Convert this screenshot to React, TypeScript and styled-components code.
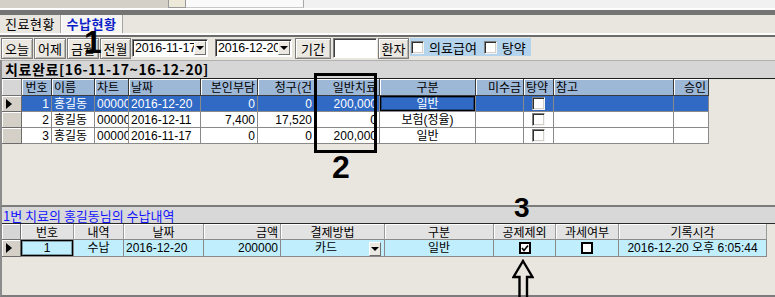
import React from 'react';
import styled, { createGlobalStyle } from 'styled-components';

type Align = 'left' | 'center' | 'right';

const GlobalStyle = createGlobalStyle`
  html, body {
    margin: 0;
    padding: 0;
    background: #e9e6df;
  }
  body {
    font-family: "Liberation Sans", "Noto Sans CJK KR", sans-serif;
    font-size: 12px;
    color: #000;
  }
`;

const Screen = styled.div`
  position: relative;
  width: 775px;
  height: 297px;
  overflow: hidden;
  background: #e9e6df;
`;

// window chrome at the very top
const TopStrip = styled.div`
  display: flex;
  height: 8px;
  background: #f1f1f1;
`;

const StripGray = styled.div`
  width: 168px;
  background: #d4d0c8;
`;

const StripArrow = styled.div`
  width: 18px;
  box-sizing: border-box;
  background: #ece9d8;
  border: 1px solid #9a9a9a;
  border-top: none;
`;

const StripField = styled.div`
  width: 118px;
  box-sizing: border-box;
  background: #fafafa;
  border-right: 1px solid #a8a8a8;
  border-bottom: 1px solid #c8c8c8;
`;

const WindowBand = styled.div`
  height: 5px;
  border-top: 2px solid #fcfcfc;
  background: #747474;
`;

const TabBar = styled.div`
  display: flex;
  height: 18px;
`;

const Tab = styled.div<{ $active?: boolean; $w: number }>`
  width: ${p => p.$w}px;
  box-sizing: border-box;
  display: flex;
  align-items: center;
  justify-content: center;
  font-family: "Noto Sans CJK KR", sans-serif;
  font-size: 13px;
  line-height: 16px;
  letter-spacing: 0.5px;
  font-weight: ${p => (p.$active ? 'bold' : 'normal')};
  color: ${p => (p.$active ? '#0a1ec8' : '#000')};
  background: ${p => (p.$active ? '#f6f5f2' : 'transparent')};
  border-right: 1px solid #a4a4a4;
  box-shadow: ${p => (p.$active ? 'inset 1px 0 0 #fff' : 'none')};
`;

const TabSeparator = styled.div`
  border-top: 2px solid #fdfdfd;
  border-bottom: 2px solid #6c6c6c;
`;

const Toolbar = styled.div`
  display: flex;
  align-items: flex-start;
  height: 23px;
  padding-top: 1px;
  box-sizing: border-box;
`;

const ToolButton = styled.div<{ $w: number; $ml: number }>`
  width: ${p => p.$w}px;
  margin-left: ${p => p.$ml}px;
  height: 21px;
  box-sizing: border-box;
  display: flex;
  align-items: center;
  justify-content: center;
  font-family: "Noto Sans CJK KR", sans-serif;
  font-size: 13px;
  line-height: 15px;
  background: #ebe8e1;
  border: 1px solid #7c7c7c;
  box-shadow: inset 1px 1px 0 #fff, inset -1px -1px 0 #b8b6b0;
`;

const Combo = styled.div<{ $w: number; $ml: number }>`
  width: ${p => p.$w}px;
  margin-left: ${p => p.$ml}px;
  margin-top: 1px;
  height: 18px;
  box-sizing: border-box;
  display: flex;
  background: #fff;
  border: 1px solid;
  border-color: #7a7a7a #fff #fff #7a7a7a;
  box-shadow: inset 1px 1px 0 #303030;
  overflow: hidden;
`;

const ComboText = styled.div`
  flex: 1;
  overflow: hidden;
  white-space: nowrap;
  padding: 1px 0 0 2px;
  font-size: 12.5px;
  line-height: 15px;
  letter-spacing: -0.2px;
`;

const DropButton = styled.div<{ $h: number }>`
  width: 12px;
  height: ${p => p.$h}px;
  margin: 1px 1px 0 0;
  box-sizing: border-box;
  display: flex;
  align-items: center;
  justify-content: center;
  background: #ece9e2;
  border: 1px solid;
  border-color: #fff #707070 #707070 #fff;
  flex-shrink: 0;
`;

const DownTriangle = styled.span`
  width: 0;
  height: 0;
  border-left: 4px solid transparent;
  border-right: 4px solid transparent;
  border-top: 4px solid #000;
`;

const TextField = styled.div<{ $w: number; $ml: number }>`
  width: ${p => p.$w}px;
  margin-left: ${p => p.$ml}px;
  height: 20px;
  box-sizing: border-box;
  background: #fff;
  border: 1px solid;
  border-color: #7a7a7a #fff #fff #7a7a7a;
  box-shadow: inset 1px 1px 0 #404040;
`;

const OptionGroup = styled.div<{ $ml: number }>`
  margin-left: ${p => p.$ml}px;
  width: 121px;
  height: 18px;
  display: flex;
  align-items: center;
  background: #b4d3ed;
  font-family: "Noto Sans CJK KR", sans-serif;
  font-size: 13px;
  line-height: 15px;
`;

const OptionLabel = styled.span<{ $ml: number }>`
  margin-left: ${p => p.$ml}px;
`;

const CheckBox = styled.span<{ $ml?: number }>`
  display: inline-block;
  width: 13px;
  height: 13px;
  margin-left: ${p => p.$ml ?? 0}px;
  box-sizing: border-box;
  background: #fff;
  border: 1px solid;
  border-color: #808080 #f4f4f4 #f4f4f4 #808080;
  box-shadow: inset 1px 1px 0 #303030, inset -1px -1px 0 #d4d0c8;
`;

const BoldBox = styled.span`
  display: inline-flex;
  align-items: center;
  justify-content: center;
  width: 12px;
  height: 12px;
  box-sizing: border-box;
  background: #fff;
  border: 2px solid #000;
`;

// panels
const Panel = styled.div<{ $h: number }>`
  height: ${p => p.$h}px;
  box-sizing: border-box;
  border-left: 2px solid #8c8c8c;
  border-bottom: 2px solid #7c7c7c;
  overflow: hidden;
`;

const TitleBar = styled.div`
  height: 19px;
  box-sizing: border-box;
  padding-left: 3px;
  background: #d6d6d6;
  border-top: 1px solid #b0b0b0;
  border-bottom: 1px solid #1e1e1e;
  font-family: "Noto Sans CJK KR", sans-serif;
  font-weight: bold;
  font-size: 14px;
  line-height: 17px;
  letter-spacing: 0.6px;
`;

const SubTitleBar = styled.div`
  height: 17px;
  box-sizing: border-box;
  padding: 1px 0 0 1px;
  background: #d8d8d8;
  border-bottom: 1px solid #2a2a2a;
  color: #1414ff;
  font-family: "Noto Sans CJK KR", sans-serif;
  font-size: 13px;
  line-height: 15px;
`;

const Grid = styled.table<{ $w: number }>`
  width: ${p => p.$w}px;
  table-layout: fixed;
  border-collapse: separate;
  border-spacing: 0;
`;

const HeadCell = styled.th<{ $align?: Align; $light?: boolean; $h: number }>`
  height: ${p => p.$h}px;
  box-sizing: border-box;
  padding: 0 2px;
  font-family: "Noto Sans CJK KR", sans-serif;
  font-weight: normal;
  font-size: 12px;
  line-height: 14px;
  text-align: ${p => p.$align ?? 'left'};
  white-space: nowrap;
  overflow: hidden;
  background: ${p => (p.$light ? '#e2e2e2' : '#9db7d6')};
  border-right: 1px solid ${p => (p.$light ? '#9a9a9a' : '#3a3a3a')};
  border-bottom: 1px solid ${p => (p.$light ? '#8a8a8a' : '#3a3a3a')};
  box-shadow: inset 1px 1px 0 #fff;
`;

const CornerCell = styled.th<{ $h: number }>`
  height: ${p => p.$h}px;
  box-sizing: border-box;
  padding: 0;
  background: #d6d6d6;
  border-right: 1px solid #707070;
  border-bottom: 1px solid #707070;
  box-shadow: inset 1px 1px 0 #fff;
`;

const RowMark = styled.td<{ $h: number }>`
  height: ${p => p.$h}px;
  box-sizing: border-box;
  padding: 0 0 0 4px;
  background: #d4d0c8;
  border-right: 1px solid #6c6c6c;
  border-bottom: 1px solid #6c6c6c;
  box-shadow: inset 1px 1px 0 #fff;
`;

const RightTriangle = styled.span`
  display: block;
  width: 0;
  height: 0;
  border-top: 5px solid transparent;
  border-bottom: 5px solid transparent;
  border-left: 6px solid #000;
`;

const Cell = styled.td<{ $align?: Align; $bg: string; $fg?: string; $focus?: boolean; $h: number }>`
  height: ${p => p.$h}px;
  box-sizing: border-box;
  padding: 0 2px;
  font-size: 12px;
  line-height: 14px;
  text-align: ${p => p.$align ?? 'left'};
  white-space: nowrap;
  overflow: hidden;
  background: ${p => p.$bg};
  color: ${p => p.$fg ?? '#000'};
  border-right: 1px solid #8a8a8a;
  border-bottom: 1px solid #8a8a8a;
  box-shadow: ${p => (p.$focus ? 'inset 0 0 0 1px #000, inset 0 0 0 2px rgba(0,0,0,0.35)' : 'none')};
`;

const CellFlex = styled.div`
  display: flex;
  align-items: center;
  justify-content: center;
`;

const PayCell = styled.div`
  display: flex;
  align-items: center;
`;

const PayText = styled.span`
  flex: 1;
  text-align: center;
`;

// annotations drawn over the screenshot
const Marker = styled.div<{ $x: number; $y: number; $size: number }>`
  position: absolute;
  left: ${p => p.$x}px;
  top: ${p => p.$y}px;
  font-family: "Liberation Sans", sans-serif;
  font-weight: bold;
  font-size: ${p => p.$size}px;
  line-height: 1;
  color: #000;
`;

const Highlight = styled.div`
  position: absolute;
  left: 314px;
  top: 73px;
  width: 63px;
  height: 80px;
  box-sizing: border-box;
  border: 3px solid #000;
`;

const ArrowWrap = styled.svg`
  position: absolute;
  left: 512px;
  top: 259px;
`;

type UpperRow = {
  no: number;
  date: string;
  self: string;
  claim: string;
  general: string;
  kind: string;
};

const UPPER_ROWS: UpperRow[] = [
  { no: 1, date: '2016-12-20', self: '0', claim: '0', general: '200,000', kind: '일반' },
  { no: 2, date: '2016-12-11', self: '7,400', claim: '17,520', general: '0', kind: '보험(정율)' },
  { no: 3, date: '2016-11-17', self: '0', claim: '0', general: '200,000', kind: '일반' },
];

const UPPER_COLS: { title: string; w: number; align: Align }[] = [
  { title: '번호', w: 30, align: 'center' },
  { title: '이름', w: 43, align: 'left' },
  { title: '차트', w: 34, align: 'left' },
  { title: '날짜', w: 72, align: 'left' },
  { title: '본인부담', w: 57, align: 'right' },
  { title: '청구(건', w: 57, align: 'right' },
  { title: '일반치료', w: 65, align: 'right' },
  { title: '구분', w: 96, align: 'center' },
  { title: '미수금', w: 48, align: 'right' },
  { title: '탕약', w: 30, align: 'left' },
  { title: '참고', w: 120, align: 'left' },
  { title: '승인', w: 35, align: 'right' },
];

const LOWER_COLS: { title: string; w: number; align: Align }[] = [
  { title: '번호', w: 53, align: 'center' },
  { title: '내역', w: 50, align: 'center' },
  { title: '날짜', w: 80, align: 'center' },
  { title: '금액', w: 77, align: 'right' },
  { title: '결제방법', w: 104, align: 'center' },
  { title: '구분', w: 109, align: 'center' },
  { title: '공제제외', w: 62, align: 'center' },
  { title: '과세여부', w: 63, align: 'center' },
  { title: '기록시각', w: 148, align: 'center' },
];

const TreatmentGrid = () => {
  const total = 20 + UPPER_COLS.reduce((s, c) => s + c.w, 0);
  return (
    <Grid $w={total}>
      <colgroup>
        <col style={{ width: 20 }} />
        {UPPER_COLS.map(c => (
          <col key={c.title} style={{ width: c.w }} />
        ))}
      </colgroup>
      <thead>
        <tr>
          <CornerCell $h={17} />
          {UPPER_COLS.map(c => (
            <HeadCell key={c.title} $align={c.align} $h={17}>
              {c.title}
            </HeadCell>
          ))}
        </tr>
      </thead>
      <tbody>
        {UPPER_ROWS.map(r => {
          const sel = r.no === 1;
          const bg = sel ? '#316ac5' : '#fff';
          const fg = sel ? '#fff' : '#000';
          return (
            <tr key={r.no}>
              <RowMark $h={16}>{sel && <RightTriangle />}</RowMark>
              <Cell $h={16} $bg={bg} $fg={fg} $align="right">{r.no}</Cell>
              <Cell $h={16} $bg={bg} $fg={fg}>홍길동</Cell>
              <Cell $h={16} $bg={bg} $fg={fg}>000001</Cell>
              <Cell $h={16} $bg={bg} $fg={fg}>{r.date}</Cell>
              <Cell $h={16} $bg={bg} $fg={fg} $align="right">{r.self}</Cell>
              <Cell $h={16} $bg={bg} $fg={fg} $align="right">{r.claim}</Cell>
              <Cell $h={16} $bg={bg} $fg={fg} $align="right">{r.general}</Cell>
              <Cell $h={16} $bg={bg} $fg={fg} $align="center" $focus={sel}>{r.kind}</Cell>
              <Cell $h={16} $bg={bg} $fg={fg} />
              <Cell $h={16} $bg={bg} $fg={fg}>
                <CellFlex>
                  <CheckBox />
                </CellFlex>
              </Cell>
              <Cell $h={16} $bg={bg} $fg={fg} />
              <Cell $h={16} $bg={bg} $fg={fg} />
            </tr>
          );
        })}
      </tbody>
    </Grid>
  );
};

const PaymentGrid = () => {
  const total = 19 + LOWER_COLS.reduce((s, c) => s + c.w, 0);
  const bg = '#c0eefd';
  return (
    <Grid $w={total}>
      <colgroup>
        <col style={{ width: 19 }} />
        {LOWER_COLS.map(c => (
          <col key={c.title} style={{ width: c.w }} />
        ))}
      </colgroup>
      <thead>
        <tr>
          <CornerCell $h={16} />
          {LOWER_COLS.map(c => (
            <HeadCell key={c.title} $align={c.align} $light $h={16}>
              {c.title}
            </HeadCell>
          ))}
        </tr>
      </thead>
      <tbody>
        <tr>
          <RowMark $h={17}>
            <RightTriangle />
          </RowMark>
          <Cell $h={17} $bg={bg} $align="center" $focus>1</Cell>
          <Cell $h={17} $bg={bg} $align="center">수납</Cell>
          <Cell $h={17} $bg={bg}>2016-12-20</Cell>
          <Cell $h={17} $bg={bg} $align="right">200000</Cell>
          <Cell $h={17} $bg={bg}>
            <PayCell>
              <PayText>카드</PayText>
              <DropButton $h={14}>
                <DownTriangle />
              </DropButton>
            </PayCell>
          </Cell>
          <Cell $h={17} $bg={bg} $align="center">일반</Cell>
          <Cell $h={17} $bg={bg}>
            <CellFlex>
              <BoldBox>
                <svg width="8" height="8" viewBox="0 0 8 8">
                  <polyline points="1,4 3,6.5 7,1.5" fill="none" stroke="#000" strokeWidth="1.6" />
                </svg>
              </BoldBox>
            </CellFlex>
          </Cell>
          <Cell $h={17} $bg={bg}>
            <CellFlex>
              <BoldBox />
            </CellFlex>
          </Cell>
          <Cell $h={17} $bg={bg} $align="center">2016-12-20 오후 6:05:44</Cell>
        </tr>
      </tbody>
    </Grid>
  );
};

export default function App() {
  return (
    <Screen>
      <GlobalStyle />
      <TopStrip>
        <StripGray />
        <StripArrow />
        <StripField />
      </TopStrip>
      <WindowBand />
      <TabBar>
        <Tab $w={61}>진료현황</Tab>
        <Tab $w={62} $active>
          수납현황
        </Tab>
      </TabBar>
      <TabSeparator />
      <Toolbar>
        <ToolButton $w={32} $ml={1}>오늘</ToolButton>
        <ToolButton $w={32} $ml={1}>어제</ToolButton>
        <ToolButton $w={32} $ml={1}>금월</ToolButton>
        <ToolButton $w={31} $ml={1}>전월</ToolButton>
        <Combo $w={76} $ml={1}>
          <ComboText>2016-11-17</ComboText>
          <DropButton $h={14}>
            <DownTriangle />
          </DropButton>
        </Combo>
        <Combo $w={77} $ml={7}>
          <ComboText>2016-12-20</ComboText>
          <DropButton $h={14}>
            <DownTriangle />
          </DropButton>
        </Combo>
        <ToolButton $w={36} $ml={3}>기간</ToolButton>
        <TextField $w={44} $ml={2} />
        <ToolButton $w={31} $ml={1}>환자</ToolButton>
        <OptionGroup $ml={1}>
          <CheckBox $ml={1} />
          <OptionLabel $ml={5}>의료급여</OptionLabel>
          <CheckBox $ml={7} />
          <OptionLabel $ml={5}>탕약</OptionLabel>
        </OptionGroup>
      </Toolbar>
      <Panel $h={147}>
        <TitleBar>치료완료[16-11-17~16-12-20]</TitleBar>
        <TreatmentGrid />
      </Panel>
      <Panel $h={90}>
        <SubTitleBar>1번 치료의 홍길동님의 수납내역</SubTitleBar>
        <PaymentGrid />
      </Panel>

      <Highlight />
      <Marker $x={84} $y={26} $size={32}>1</Marker>
      <Marker $x={332} $y={151} $size={32}>2</Marker>
      <Marker $x={514} $y={194} $size={28}>3</Marker>
      <ArrowWrap width="22" height="40" viewBox="0 0 22 40">
        <polygon
          points="11,2 20.5,18 15,18 15,40 7.5,40 7.5,18 1.5,18"
          fill="none"
          stroke="#000"
          strokeWidth="2.4"
          strokeLinejoin="miter"
        />
      </ArrowWrap>
    </Screen>
  );
}
